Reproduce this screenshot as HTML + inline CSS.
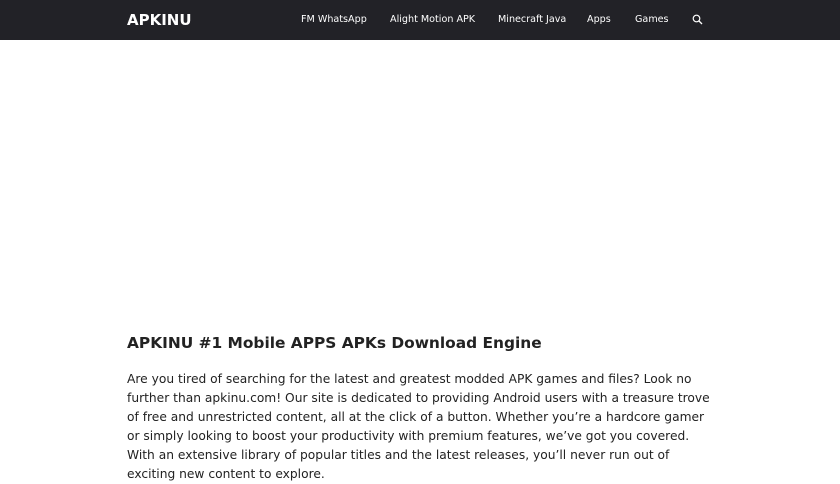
<!DOCTYPE html>
<html><head><meta charset="utf-8"><style>
*{margin:0;padding:0;box-sizing:border-box}
body{width:840px;height:472px;overflow:hidden;background:#fff;font-family:"DejaVu Sans","Liberation Sans",sans-serif;color:#222}
.nav{height:40px;background:#222227;position:relative;color:#fff}
.logo{position:absolute;left:127px;top:11px;font-weight:bold;font-size:15px}
.nav a{position:absolute;top:14px;font-size:9.6px;color:#fff;text-decoration:none;white-space:nowrap}
h1{position:absolute;left:127px;top:334px;font-size:15.4px;font-weight:bold;color:#222;white-space:nowrap}
p{position:absolute;left:127px;top:370px;font-size:12.25px;line-height:19px;color:#222;white-space:nowrap}
</style></head><body>
<div class="nav">
<div class="logo">APKINU</div>
<a style="left:301px">FM WhatsApp</a>
<a style="left:390px">Alight Motion APK</a>
<a style="left:498px">Minecraft Java</a>
<a style="left:587px">Apps</a>
<a style="left:635px">Games</a>
<svg style="position:absolute;left:692px;top:14px" width="11" height="11" viewBox="0 0 11 11"><circle cx="4.5" cy="4.5" r="3.3" fill="none" stroke="#fff" stroke-width="1.2"/><path d="M7 7L10 10" stroke="#fff" stroke-width="1.3"/></svg>
</div>
<h1>APKINU #1 Mobile APPS APKs Download Engine</h1>
<p>Are you tired of searching for the latest and greatest modded APK games and files? Look no<br>further than apkinu.com! Our site is dedicated to providing Android users with a treasure trove<br>of free and unrestricted content, all at the click of a button. Whether you’re a hardcore gamer<br>or simply looking to boost your productivity with premium features, we’ve got you covered.<br>With an extensive library of popular titles and the latest releases, you’ll never run out of<br>exciting new content to explore.</p>
</body></html>
